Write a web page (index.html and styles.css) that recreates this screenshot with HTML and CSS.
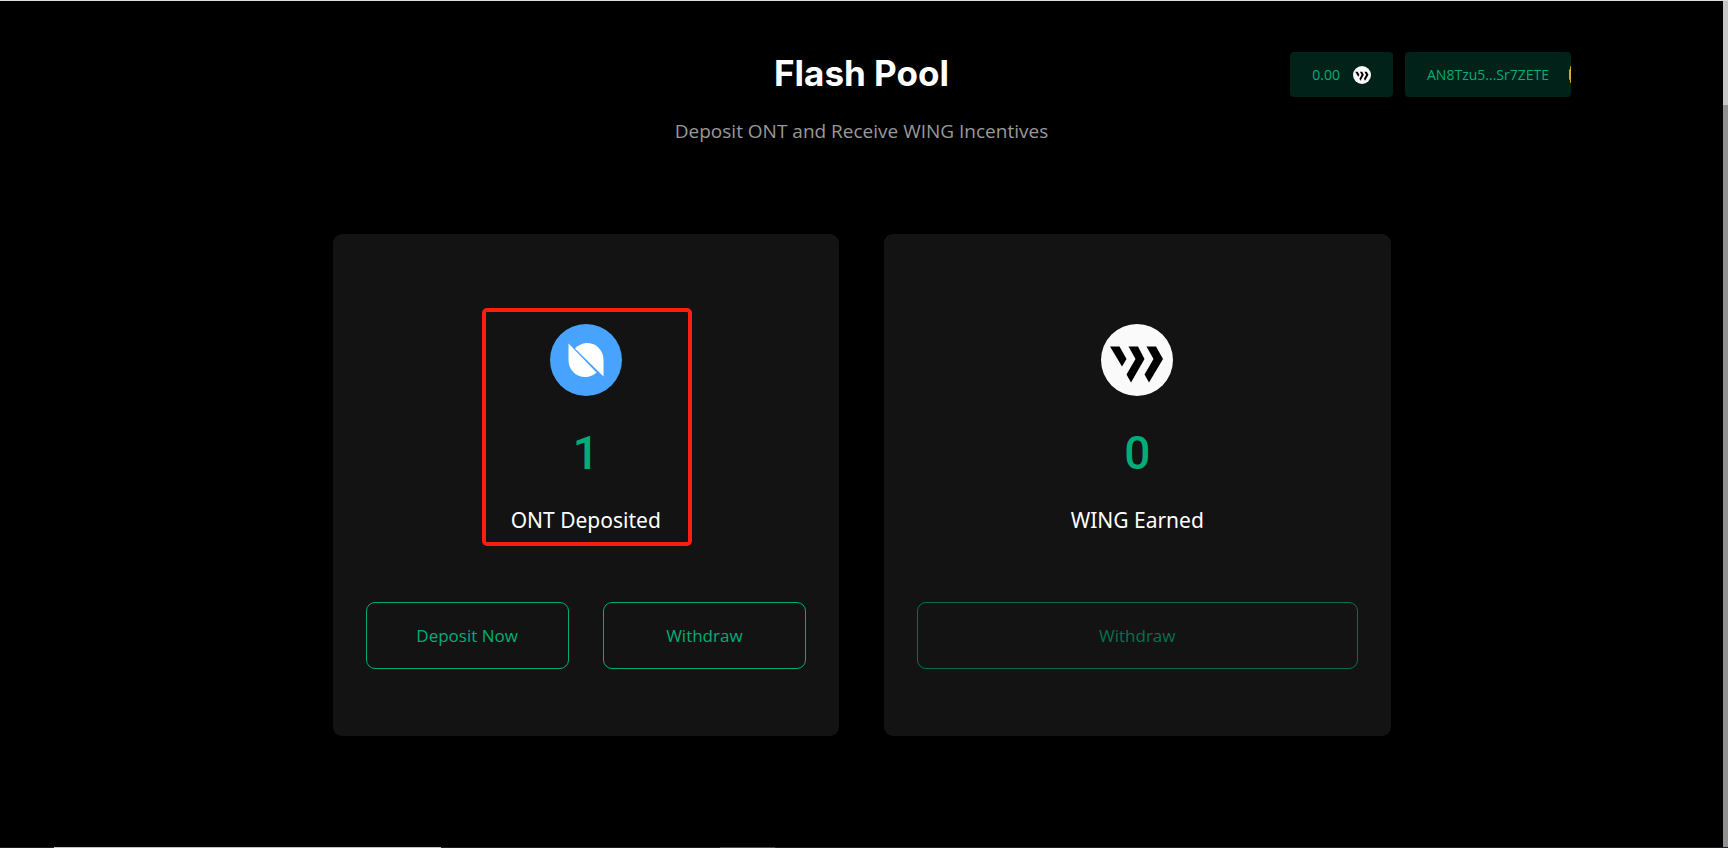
FILE: index.html
```html
<!DOCTYPE html>
<html lang="en">
  <head>
    <meta charset="utf-8" />
    <title>Flash Pool</title>
    <link rel="stylesheet" href="styles.css">
  </head>
  <body>
    <!-- wing mark, shared by the balance button and the card -->
    <svg class="sprite" aria-hidden="true">
      <symbol id="wing" viewBox="0 0 72 72">
        <circle cx="36" cy="36" r="36" fill="#fafafa" />
        <path d="M9 22.500h9.500l7 12.500-4.500 7.500z" />
        <path d="M27.500 22.500h9.500l6.500 12.500-13.500 23.500-4.500-8 9-15.500z" />
        <path d="M45.500 22.500h9.500l7 12.500-14 23.500-4.500-8 9-15.500z" />
      </symbol>
    </svg>

    <div class="top-line"></div>

    <div class="viewport">
      <main class="page">
        <header class="header">
          <h1 class="title">Flash Pool</h1>
          <div class="wallet">
            <button class="wallet-button balance">
              0.00
              <svg class="balance-icon"><use href="#wing" /></svg>
            </button>
            <button class="wallet-button address">AN8Tzu5...Sr7ZETE</button>
          </div>
        </header>
        <p class="subtitle">Deposit ONT and Receive WING Incentives</p>

        <div class="cards">
          <section class="card">
            <div class="token highlighted">
              <svg class="token-icon" viewBox="0 0 72 72">
                <circle cx="36" cy="36" r="36" fill="#48a3ff" />
                <g fill="#fff">
                  <path d="M18.500 19.500 46.500 48.500a17 17 0 0 1-11 4.500c-10 0-17-7.500-17-17z" />
                  <path d="M25 24.500a17.500 17.500 0 0 1 11.500-5.500c10 0 17 7.500 17 17v16.500z" />
                </g>
              </svg>
              <div class="amount">1</div>
              <div class="token-label">ONT Deposited</div>
            </div>
            <div class="actions">
              <button class="action-button">Deposit Now</button>
              <button class="action-button">Withdraw</button>
            </div>
          </section>

          <section class="card">
            <div class="token">
              <svg class="token-icon"><use href="#wing" /></svg>
              <div class="amount">0</div>
              <div class="token-label">WING Earned</div>
            </div>
            <div class="actions">
              <button class="action-button" disabled>Withdraw</button>
            </div>
          </section>
        </div>
      </main>

      <div class="scrollbar">
        <div class="scrollbar-thumb"></div>
      </div>
    </div>

    <div class="bottom-line"></div>
  </body>
</html>
```

FILE: styles.css
```css
* {
  box-sizing: border-box;
}

body {
  margin: 0;
  min-height: 100vh;
  display: flex;
  flex-direction: column;
  background: #000;
  color: #fff;
  font-family: "Segoe UI", "Open Sans", sans-serif;
}

button {
  font-family: inherit;
  cursor: pointer;
}

.sprite {
  display: none;
}

.top-line {
  height: 1px;
  background: #d9dde2;
}

.bottom-line {
  height: 1px;
  background: linear-gradient(
    to right,
    #1b2030 54px,
    #c5c0c0 54px 441px,
    #1b2030 441px 720px,
    #4c4c4c 720px 775px,
    #1b2030 775px
  );
}

.viewport {
  flex: 1;
  display: flex;
}

.page {
  flex: 1;
  padding: 51px 152px 0;
}

.header {
  display: grid;
  grid-template-columns: 1fr auto 1fr;
  align-items: center;
}

.title {
  grid-column: 2;
  margin: 0;
  font-family: Inter, sans-serif;
  font-size: 35px;
  font-weight: 700;
  line-height: 43px;
  padding-bottom: 2px;
}

.wallet {
  display: flex;
  justify-content: flex-end;
  gap: 12px;
}

.wallet-button {
  display: flex;
  align-items: center;
  height: 45px;
  padding: 0 22px;
  border: none;
  border-radius: 4px;
  background: #002219;
  color: #00ad79;
  font-size: 14px;
}

.balance {
  gap: 13px;
}

.balance-icon {
  width: 18px;
  height: 18px;
}

/* the account avatar is clipped to a sliver at the right edge */
.address {
  background: radial-gradient(ellipse 2px 9px at right, #d9a632 90%, #002219);
}

.subtitle {
  margin: 20px 0 0;
  color: #999;
  font-size: 19px;
  line-height: 28px;
  text-align: center;
}

.cards {
  display: grid;
  grid-template-columns: 1fr 1fr;
  gap: 45px;
  max-width: 1058px;
  margin: 89px auto 0;
}

.card {
  padding: 90px 33px 67px;
  border-radius: 9px;
  background: #131313;
}

.token {
  position: relative;
  display: flex;
  flex-direction: column;
  align-items: center;
  width: fit-content;
  margin: 0 auto;
}

/* red frame drawn over the card */
.highlighted::after {
  content: "";
  position: absolute;
  inset: -16px -31px -11px -29px;
  border: 4px solid #fc1e10;
  border-radius: 5px;
}

.token-icon {
  width: 72px;
  height: 72px;
}

.amount {
  margin-top: 27px;
  color: #00ad79;
  font-family: Roboto, sans-serif;
  font-size: 46px;
  font-weight: 500;
  line-height: 60px;
}

.token-label {
  margin-top: 22px;
  font-family: "Segoe UI", "Noto Sans", sans-serif;
  font-size: 21px;
  line-height: 30px;
}

.actions {
  display: flex;
  gap: 34px;
  margin-top: 67px;
}

.action-button {
  flex: 1;
  height: 67px;
  border: 1px solid #00ad79;
  border-radius: 9px;
  background: transparent;
  color: #00ad79;
  font-size: 17px;
}

.action-button:disabled {
  opacity: 0.6;
  cursor: not-allowed;
}

.scrollbar {
  width: 5px;
  padding-top: 104px;
  display: flex;
  background: #c8c8c8;
}

.scrollbar-thumb {
  flex: 1;
  background: #929292;
}
```
